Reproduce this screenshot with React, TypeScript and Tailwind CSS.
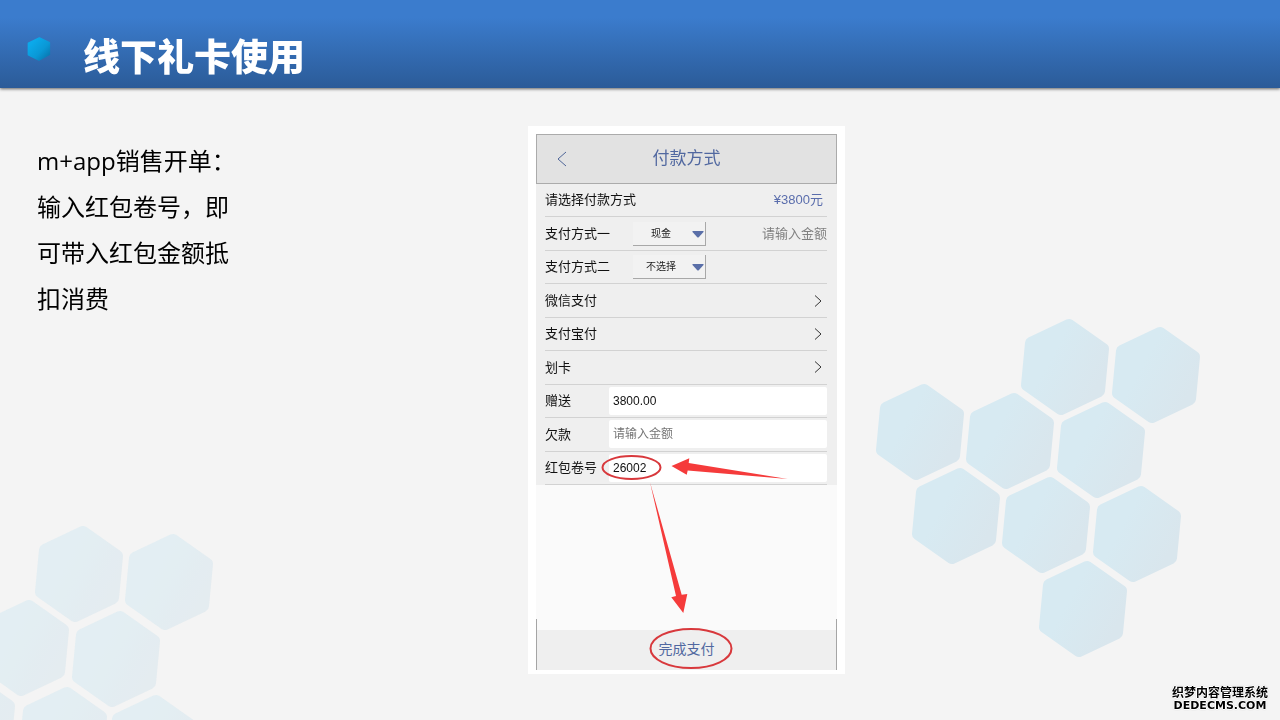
import React, { useState } from 'react';

interface SelectRowProps {
  id: string;
  label: string;
  options: string[];
  children?: React.ReactNode;
}

interface InputRowProps {
  id: string;
  label: string;
  initial?: string;
  placeholder?: string;
}

const HEX_POINTS = '4,-42 38,-18 34,24 -4,42 -38,18 -34,-24';

const rightCluster = [
  [1065, 367], [1156, 375], [920, 432], [1010, 441], [1101, 450],
  [956, 516], [1046, 525], [1137, 534], [1083, 609],
];

const leftCluster = [
  [79, 574], [169, 582], [25, 648], [116, 659], [-29, 724], [63, 735], [152, 743],
];

const Backdrop = () => (
  <svg
    className="pointer-events-none absolute inset-0 h-full w-full"
    viewBox="0 0 1280 720"
    preserveAspectRatio="xMidYMid slice"
    aria-hidden="true"
  >
    <defs>
      <linearGradient id="hex-fill" x1="0" y1="0" x2="1" y2="0.6">
        <stop offset="0.4" stopColor="#d7eaf2" />
        <stop offset="1" stopColor="#d9e6ed" />
      </linearGradient>
    </defs>
    {rightCluster.map(([x, y]) => (
      <polygon
        key={`${x}-${y}`}
        points={HEX_POINTS}
        transform={`translate(${x} ${y})`}
        fill="url(#hex-fill)"
        stroke="url(#hex-fill)"
        strokeWidth="12"
        strokeLinejoin="round"
      />
    ))}
    <g opacity="0.6">
      {leftCluster.map(([x, y]) => (
        <polygon
          key={`${x}-${y}`}
          points={HEX_POINTS}
          transform={`translate(${x} ${y})`}
          fill="url(#hex-fill)"
          stroke="url(#hex-fill)"
          strokeWidth="12"
          strokeLinejoin="round"
        />
      ))}
    </g>
  </svg>
);

const HexBullet = () => (
  <svg className="h-6 w-6" viewBox="0 0 24 24" aria-hidden="true">
    <defs>
      <linearGradient id="bullet-fill" x1="0" y1="0" x2="1" y2="1">
        <stop offset="0.2" stopColor="#0ba9ea" />
        <stop offset="0.6" stopColor="#0a98d6" />
        <stop offset="1" stopColor="#0870a8" />
      </linearGradient>
    </defs>
    <path
      d="M12.4 1 22.4 5.800 22.400 17.400 12 23 1.400 17.800 1.400 6.200Z"
      fill="url(#bullet-fill)"
      stroke="url(#bullet-fill)"
      strokeWidth="1.500"
      strokeLinejoin="round"
    />
  </svg>
);

const Row = ({ children }: { children: React.ReactNode }) => (
  <div className="flex min-h-0 flex-1 items-center border-b border-[#d2d2d2]">{children}</div>
);

const SelectRow = ({ id, label, options, children }: SelectRowProps) => (
  <Row>
    <label htmlFor={id} className="w-[88px]">{label}</label>
    <div className="relative">
      <select
        id={id}
        className="block h-6 w-[73px] appearance-none border-r border-b border-[#a8a8a8] bg-[#f2f2f2] pr-4 text-center text-[10px] text-[#222]"
      >
        {options.map((option) => (
          <option key={option}>{option}</option>
        ))}
      </select>
      <svg className="pointer-events-none absolute top-2 right-0.5 h-2 w-3" viewBox="0 0 12 8" aria-hidden="true">
        <path d="M0.500 1h11v1L6.500 7.500h-1L0.500 2Z" fill="#5a6fa8" />
      </svg>
    </div>
    {children}
  </Row>
);

const LinkRow = ({ label }: { label: string }) => (
  <Row>
    <button type="button" className="flex h-full w-full items-center justify-between pr-1">
      {label}
      <svg className="h-3.5 w-2.5" viewBox="0 0 10 14" fill="none" stroke="#333" aria-hidden="true">
        <path d="M2 1.500l6 5.500-6 5.500" />
      </svg>
    </button>
  </Row>
);

const InputRow = ({ id, label, initial = '', placeholder }: InputRowProps) => {
  const [value, setValue] = useState(initial);

  return (
    <Row>
      <label htmlFor={id} className="w-16">{label}</label>
      <input
        id={id}
        value={value}
        placeholder={placeholder}
        onChange={(e) => setValue(e.target.value)}
        className="h-7 min-w-0 flex-1 rounded-xs bg-white px-1 text-xs text-[#111] placeholder:text-[#777]"
      />
    </Row>
  );
};

// Red circles and arrows that point out the coupon number and the pay button
const Marks = () => (
  <svg
    className="pointer-events-none absolute inset-0 h-full w-full"
    viewBox="0 0 317 548"
    aria-hidden="true"
  >
    <g fill="none" stroke="#d8383c" strokeWidth="2">
      <ellipse cx="103.500" cy="341.500" rx="29" ry="11.500" />
      <ellipse cx="163" cy="522.500" rx="40.500" ry="19.500" />
    </g>
    <g fill="#f53b3b">
      <path d="M143.500 340 161.300 332.300 160.700 337 259.700 353 159.700 344.500 158.700 348.700Z" />
      <path d="M122 356.300 153.700 468.700 159.300 468 155.300 487 143.300 471.300 148 470Z" />
    </g>
  </svg>
);

const PaymentPanel = () => (
  <form
    className="relative h-[548px] w-[317px] shrink-0 bg-white px-2 pt-2 pb-1 font-['Liberation_Sans','Noto_Sans_CJK_SC',sans-serif] text-[13px] text-[#111]"
    onSubmit={(e) => e.preventDefault()}
  >
    <div className="flex h-full flex-col">
      <header className="grid h-[50px] grid-cols-[1fr_auto_1fr] items-center border border-[#ababab] bg-[#e2e2e2] text-[#5168a0]">
        <button type="button" aria-label="返回" className="ml-5 w-3">
          <svg className="h-4 w-3" viewBox="0 0 12 16" fill="none" stroke="#4e6598" aria-hidden="true">
            <path d="M9 1 1 8l8 7" />
          </svg>
        </button>
        <h2 className="text-[17px]">付款方式</h2>
      </header>

      <div className="flex h-[301px] flex-col bg-[#efefef] pr-2.5 pl-[9px]">
        <Row>
          <span>请选择付款方式</span>
          <span className="ml-auto pr-1 text-[#5a6dac]">¥3800元</span>
        </Row>
        <SelectRow id="method-1" label="支付方式一" options={['现金', '不选择']}>
          <input
            aria-label="金额"
            placeholder="请输入金额"
            className="ml-auto w-20 bg-transparent text-right placeholder:text-[#808080]"
          />
        </SelectRow>
        <SelectRow id="method-2" label="支付方式二" options={['不选择', '现金']} />
        <LinkRow label="微信支付" />
        <LinkRow label="支付宝付" />
        <LinkRow label="划卡" />
        <InputRow id="gift" label="赠送" initial="3800.00" />
        <InputRow id="debt" label="欠款" placeholder="请输入金额" />
        <InputRow id="coupon" label="红包卷号" initial="26002" />
      </div>

      <div className="flex-1 bg-[#fafafa]" />

      <div className="border-x border-[#a5a5a5] bg-[#fafafa] pt-[11px]">
        <button type="submit" className="block h-10 w-full bg-[#efefef] pb-0.5 text-sm text-[#5168a0]">
          完成支付
        </button>
      </div>
    </div>
    <Marks />
  </form>
);

const App = () => {
  return (
    <div className="relative min-h-screen overflow-hidden bg-[#f4f4f4] font-['Noto_Sans','Noto_Sans_CJK_SC',sans-serif]" lang="zh-CN">
      <Backdrop />
      <div className="relative">
        <header className="flex h-[88px] items-center gap-8 bg-linear-to-b from-[#3b7ccd] from-20% to-[#2b5b98] pl-[27px] shadow-[0_1px_3px_rgba(0,0,0,0.6)]">
          <div className="pt-2.5">
            <HexBullet />
          </div>
          <h1 className="pt-[22px] font-['Noto_Sans_CJK_SC',sans-serif] text-[37px] leading-none font-black text-white">
            线下礼卡使用
          </h1>
        </header>

        <main className="flex items-start pt-[38px] pl-[37px]">
          <div className="w-[491px] shrink-0 pt-3">
            <p className="w-52 font-['Open_Sans','Noto_Sans_CJK_SC',sans-serif] text-2xl leading-[46px] text-black">
              m+app销售开单：
              <br />
              输入红包卷号，即可带入红包金额抵扣消费
            </p>
          </div>
          <PaymentPanel />
        </main>

        <footer className="flex justify-end pt-3 pr-3">
          <div className="text-center font-bold text-black [text-shadow:1px_0_#fff,-1px_0_#fff,0_1px_#fff,0_-1px_#fff,0_0_2px_#888]">
            <div className="text-xs leading-[14px]">织梦内容管理系统</div>
            <div className="font-['DejaVu_Sans',sans-serif] text-[11px] leading-3">DEDECMS.COM</div>
          </div>
        </footer>
      </div>
    </div>
  );
};

export default App;
